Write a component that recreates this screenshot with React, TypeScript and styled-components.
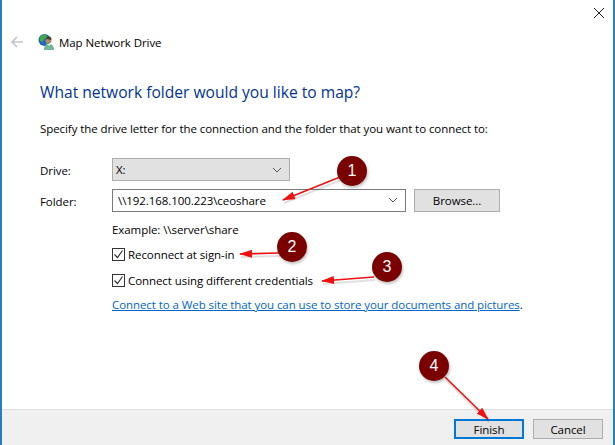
import React from "react";
import styled, { createGlobalStyle } from "styled-components";

const GlobalStyle = createGlobalStyle`
  html, body {
    margin: 0;
    padding: 0;
    background: #fff;
  }
  body {
    font-family: "Open Sans", "Noto Sans", sans-serif;
    font-size: 11.5px;
    letter-spacing: -0.07px;
    color: #000;
  }
`;

const Dialog = styled.div`
  position: relative;
  box-sizing: border-box;
  width: 615px;
  height: 445px;
  display: flex;
  flex-direction: column;
  background: #fff;
  border-left: 2px solid #2b7cc4;
  border-right: 2px solid #2b7cc4;
  overflow: hidden;
`;

const CloseButton = styled.div`
  position: absolute;
  top: 5px;
  right: 6px;
  width: 16px;
  height: 16px;
  color: #222;
`;

const Body = styled.div`
  flex: 1;
  display: flex;
  flex-direction: column;
  padding: 32px 0 0 8px;
`;

const Header = styled.div`
  display: flex;
  align-items: center;
  height: 20px;
`;

const BackArrow = styled.div`
  width: 14px;
  height: 14px;
  margin-right: 14px;
  color: #c4c4c4;
`;

const AppIcon = styled.div`
  width: 17px;
  height: 18px;
  margin-right: 4px;
`;

const Heading = styled.h1`
  margin: 30px 0 0 30px;
  font-size: 15.6px;
  letter-spacing: 0;
  line-height: 20px;
  font-weight: 400;
  color: #003399;
`;

const Description = styled.p`
  margin: 19px 0 0 30px;
  line-height: 16px;
`;

const Form = styled.div`
  display: grid;
  grid-template-columns: 72px 1fr;
  margin: 21px 0 0 30px;
  row-gap: 7px;
  align-items: center;
`;

const FieldLabel = styled.span`
  line-height: 16px;
  padding-top: 3px;
`;

const DriveSelect = styled.div`
  box-sizing: border-box;
  width: 178px;
  height: 23px;
  padding: 0 7px 0 3px;
  display: flex;
  align-items: center;
  justify-content: space-between;
  background: #e1e1e1;
  border: 1px solid #adadad;
`;

const FolderRow = styled.div`
  display: flex;
  align-items: center;
  gap: 8px;
`;

const FolderInput = styled.div`
  box-sizing: border-box;
  width: 294px;
  height: 23px;
  padding: 0 7px 0 5px;
  display: flex;
  align-items: center;
  justify-content: space-between;
  background: #fff;
  border: 1px solid #7a7a7a;
`;

const Chevron = styled.svg`
  width: 10px;
  height: 6px;
  color: #555;
`;

const Button = styled.div<{ $focused?: boolean }>`
  box-sizing: border-box;
  width: 70px;
  height: 20px;
  display: flex;
  align-items: center;
  justify-content: center;
  background: #e1e1e1;
  border: ${(p) => (p.$focused ? "2px solid #0078d7" : "1px solid #adadad")};
`;

const BrowseButton = styled(Button)`
  width: 86px;
  height: 23px;
  margin-top: 1px;
`;

const Options = styled.div`
  display: flex;
  flex-direction: column;
  margin: 10px 0 0 102px;
`;

const Example = styled.span`
  line-height: 16px;
`;

const CheckRow = styled.label<{ $gap: number }>`
  display: flex;
  align-items: center;
  gap: 3px;
  height: 16px;
  margin-top: ${(p) => p.$gap}px;
`;

const CheckBox = styled.span`
  box-sizing: border-box;
  width: 13px;
  height: 13px;
  display: flex;
  align-items: center;
  justify-content: center;
  border: 1px solid #333;
  background: #fff;
`;

const LinkLine = styled.div`
  margin-top: 9px;
  line-height: 16px;
`;

const WebLink = styled.a`
  color: #0066cc;
  text-decoration: underline;
`;

const Footer = styled.div`
  box-sizing: border-box;
  height: 36px;
  display: flex;
  align-items: flex-start;
  justify-content: flex-end;
  gap: 9px;
  padding: 9px 10px 0 0;
  background: #f0f0f0;
  border-top: 1px solid #dfdfdf;
`;

const Annotations = styled.svg`
  position: absolute;
  left: -2px;
  top: 0;
  width: 615px;
  height: 445px;
  pointer-events: none;
`;

const Badge = styled.div<{ $x: number; $y: number }>`
  position: absolute;
  left: ${(p) => p.$x - 17}px;
  top: ${(p) => p.$y - 15}px;
  width: 30px;
  height: 30px;
  display: flex;
  align-items: center;
  justify-content: center;
  border-radius: 50%;
  background: #7b0000;
  color: #fff;
  font-family: "Liberation Sans", sans-serif;
  font-size: 16px;
  letter-spacing: 0;
  box-shadow: 1px 2px 3px rgba(0, 0, 0, 0.25);
`;

const arrows = [
  { x1: 340, y1: 177, x2: 283, y2: 200 },
  { x1: 279, y1: 253, x2: 240, y2: 254 },
  { x1: 374, y1: 277, x2: 322, y2: 281 },
  { x1: 445, y1: 377, x2: 488, y2: 419 },
];

const badges = [
  { n: 1, x: 352, y: 171 },
  { n: 2, x: 292, y: 247 },
  { n: 3, x: 387, y: 267 },
  { n: 4, x: 434, y: 366 },
];

const ChevronIcon = () => (
  <Chevron viewBox="0 0 10 6">
    <path d="M1 1l4 4 4-4" fill="none" stroke="currentColor" strokeWidth="1" />
  </Chevron>
);

const Tick = () => (
  <svg width="11" height="11" viewBox="0 0 11 11">
    <path d="M1.5 5.500l3 3 5-7" fill="none" stroke="#333" strokeWidth="1.2" />
  </svg>
);

const NetworkIcon = () => (
  <svg width="17" height="18" viewBox="0 0 17 18">
    <circle cx="6.500" cy="7" r="6" fill="#1f63c4" />
    <path d="M2 4c2-2 4-3 6-2l1 2-3 2-1 3-3-1z" fill="#3fae3a" />
    <path d="M8 9l3 1-1 3-2 0z" fill="#3fae3a" />
    <circle cx="10.500" cy="7.500" r="3" fill="#b08a6a" />
    <path d="M8 6.500c0-2 1.500-3 3-3s2.500 1 2.500 3l-1 .5-3-1z" fill="#4a3a2c" />
    <path d="M6 17c0-4 2-6 5-6s5 2 5 6z" fill="#6fb596" />
    <path d="M9 11l2 2 2-2z" fill="#dfeee6" />
  </svg>
);

const App = () => {
  return (
    <>
      <GlobalStyle />
      <Dialog>
        <CloseButton>
          <svg width="16" height="16" viewBox="0 0 16 16">
            <path d="M3 3l10 10M13 3L3 13" stroke="currentColor" strokeWidth="1" />
          </svg>
        </CloseButton>
        <Body>
          <Header>
            <BackArrow>
              <svg width="14" height="14" viewBox="0 0 14 14">
                <path d="M13 7H2M7 2L2 7l5 5" fill="none" stroke="currentColor" strokeWidth="1.6" />
              </svg>
            </BackArrow>
            <AppIcon>
              <NetworkIcon />
            </AppIcon>
            Map Network Drive
          </Header>
          <Heading>What network folder would you like to map?</Heading>
          <Description>Specify the drive letter for the connection and the folder that you want to connect to:</Description>
          <Form>
            <FieldLabel>Drive:</FieldLabel>
            <DriveSelect>
              X:
              <ChevronIcon />
            </DriveSelect>
            <FieldLabel>Folder:</FieldLabel>
            <FolderRow>
              <FolderInput>
                {"\\\\192.168.100.223\\ceoshare"}
                <ChevronIcon />
              </FolderInput>
              <BrowseButton>Browse...</BrowseButton>
            </FolderRow>
          </Form>
          <Options>
            <Example>{"Example: \\\\server\\share"}</Example>
            <CheckRow $gap={8}>
              <CheckBox>
                <Tick />
              </CheckBox>
              Reconnect at sign-in
            </CheckRow>
            <CheckRow $gap={10}>
              <CheckBox>
                <Tick />
              </CheckBox>
              Connect using different credentials
            </CheckRow>
            <LinkLine>
              <WebLink>Connect to a Web site that you can use to store your documents and pictures</WebLink>.
            </LinkLine>
          </Options>
        </Body>
        <Footer>
          <Button $focused>Finish</Button>
          <Button>Cancel</Button>
        </Footer>
        <Annotations viewBox="0 0 615 445">
          <defs>
            <marker id="head" markerWidth="14" markerHeight="10" refX="12" refY="4" orient="auto" markerUnits="userSpaceOnUse">
              <path d="M0 0L13 4L0 8z" fill="#f01010" />
            </marker>
          </defs>
          {arrows.map((a, i) => (
            <g key={i}>
              <line x1={a.x1 + 1} y1={a.y1 + 3} x2={a.x2 + 1} y2={a.y2 + 3} stroke="#000" strokeOpacity="0.12" strokeWidth="2" />
              <line {...a} stroke="#ee1111" strokeWidth="1.6" markerEnd="url(#head)" />
            </g>
          ))}
        </Annotations>
        {badges.map((b) => (
          <Badge key={b.n} $x={b.x} $y={b.y}>
            {b.n}
          </Badge>
        ))}
      </Dialog>
    </>
  );
};

export default App;
